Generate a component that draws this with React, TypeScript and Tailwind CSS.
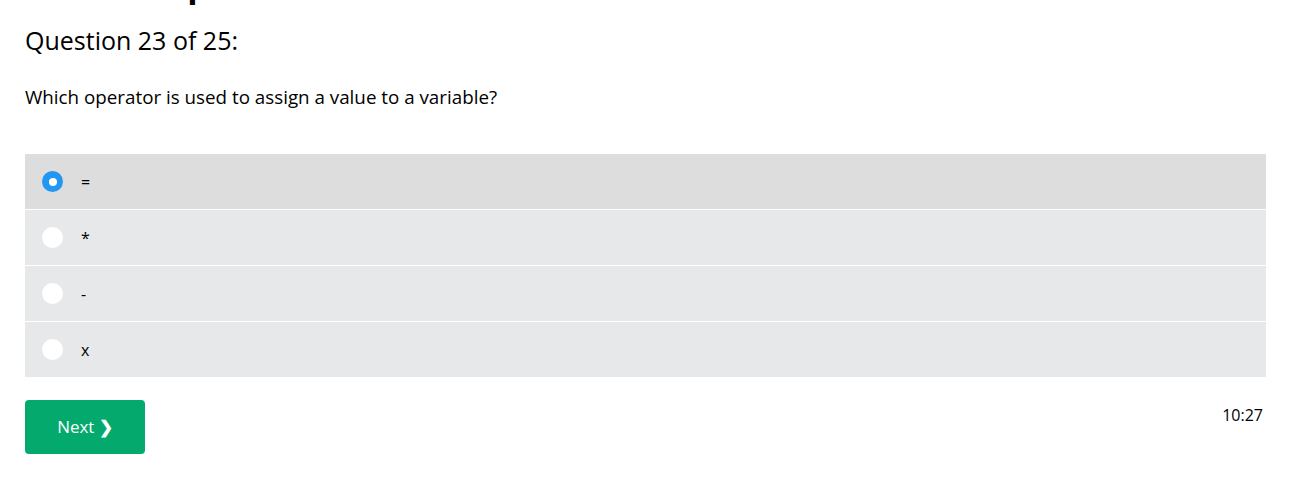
import { useState } from 'react';

const options = ['=', '*', '-', 'x'];

export default function App() {
  const [selected, setSelected] = useState(0);

  return (
    <div className="min-h-screen bg-white text-black overflow-hidden font-['Open_Sans',sans-serif]">
      <div className="pl-[25px] pr-[23px]">
        {/* page title, scrolled mostly out of view */}
        <h1 className="text-[34px] font-bold leading-[40px] -mt-[36px]">HTML Help</h1>

        <h2 className="text-[25px] leading-[34px] mt-[19px]">Question 23 of 25:</h2>

        <p className="text-[18.8px] leading-[26px] mt-[27px]">Which operator is used to assign a value to a variable?</p>

        {/* answer options */}
        <div className="mt-[44px] flex flex-col gap-px">
          {options.map((opt, i) => (
            <label
              key={i}
              onClick={() => setSelected(i)}
              className={`flex items-center h-[55px] pl-[17px] cursor-pointer ${selected === i ? 'bg-[#dddddd]' : 'bg-[#e7e8ea]'}`}
            >
              <span
                className={`w-[21px] h-[21px] rounded-full flex items-center justify-center ${selected === i ? 'bg-[#2196f3]' : 'bg-white'}`}
              >
                {selected === i && <span className="w-[8px] h-[8px] rounded-full bg-white" />}
              </span>
              <span className="ml-[18px] text-[16px]">{opt}</span>
            </label>
          ))}
        </div>

        <div className="flex justify-between items-start mt-[23px]">
          <button className="w-[120px] h-[54px] rounded-[4px] bg-[#04aa6d] text-white text-[17px]">
            Next <span className="font-bold">❯</span>
          </button>
          <span className="text-[16px] leading-[24px] mt-[3px] mr-[3px]">10:27</span>
        </div>
      </div>
    </div>
  );
}
